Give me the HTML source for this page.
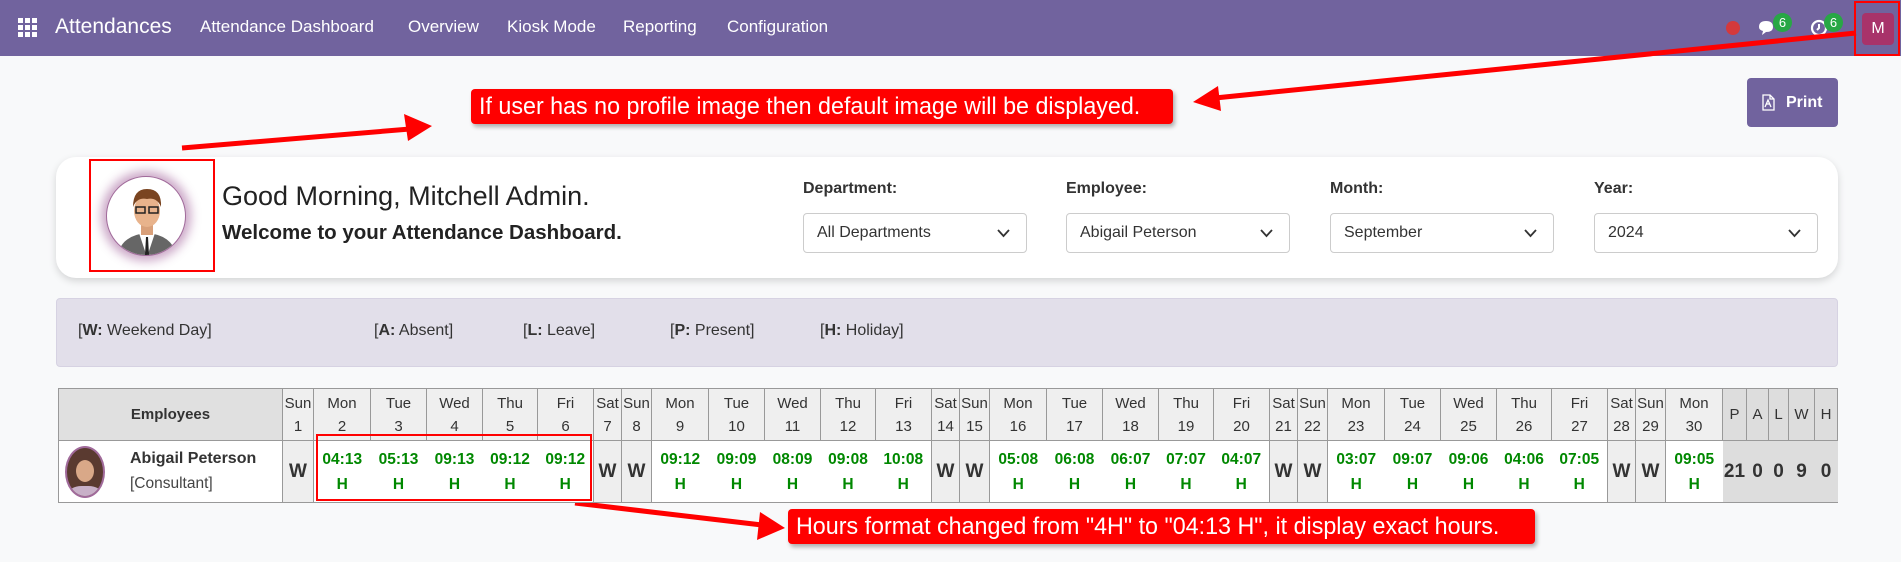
<!DOCTYPE html>
<html><head><meta charset="utf-8">
<style>
*{box-sizing:border-box;margin:0;padding:0}
body{width:1901px;height:562px;overflow:hidden;background:#f8f9fa;font-family:"Liberation Sans",sans-serif;position:relative;color:#222}
.nav{position:absolute;left:0;top:0;width:1901px;height:56px;background:#71639e;color:#fff}
.nav span{position:absolute;top:17px;font-size:17px}
.abs{position:absolute}
.callout{position:absolute;background:#f00;color:#fff;font-size:24px;border-radius:4px;box-shadow:2px 3px 4px rgba(0,0,0,.3);white-space:nowrap;padding-left:8px;line-height:35px;overflow:hidden}
.callout span{display:inline-block;transform:scaleX(.97);transform-origin:0 50%}
.card{position:absolute;left:56px;top:157px;width:1782px;height:121px;background:#fff;border-radius:20px;box-shadow:0 3px 8px rgba(0,0,0,.15)}
.lbl{position:absolute;top:180px;font-weight:bold;font-size:16px;color:#333}
.sel{position:absolute;top:213px;width:224px;height:40px;border:1px solid #ccc;border-radius:4px;background:#fff;font-size:16px;color:#333;padding:10px 0 0 13px}
.sel svg{position:absolute;right:16px;top:15px}
.legend{position:absolute;left:56px;top:298px;width:1782px;height:69px;background:#e2dfea;border:1px solid #d6d2e2;border-radius:4px}
.legend span{position:absolute;top:23px;font-size:16px;color:#333}
table{position:absolute;left:58px;top:388px;width:1778px;border-collapse:collapse;table-layout:fixed}
td,th{border:1px solid #999;text-align:center;padding:0;overflow:hidden}
th{background:#efefef;font-weight:normal;font-size:15px;line-height:23px;color:#333;height:52px}
td{height:62px}
td.w{background:#eee;font-weight:bold;font-size:19px;color:#333}
td.d{background:#fff;color:#080;font-weight:bold;font-size:15.5px;line-height:25px;border-left:none;border-right:none}
td.s{background:#ddd;font-weight:bold;font-size:19px;color:#333;border-left:none;border-right:none}
tr.h th.s{background:#ddd}
</style></head><body>
<div class="nav">
<svg class="abs" style="left:18px;top:18px" width="20" height="20"><g fill="#fff"><rect x="0" y="0" width="5" height="5"/><rect x="7" y="0" width="5" height="5"/><rect x="14" y="0" width="5" height="5"/><rect x="0" y="7" width="5" height="5"/><rect x="7" y="7" width="5" height="5"/><rect x="14" y="7" width="5" height="5"/><rect x="0" y="14" width="5" height="5"/><rect x="7" y="14" width="5" height="5"/><rect x="14" y="14" width="5" height="5"/></g></svg>
<span style="left:55px;top:15px;font-size:21px">Attendances</span>
<span style="left:200px">Attendance Dashboard</span>
<span style="left:408px">Overview</span>
<span style="left:507px">Kiosk Mode</span>
<span style="left:623px">Reporting</span>
<span style="left:727px">Configuration</span>
<div class="abs" style="left:1726px;top:21px;width:14px;height:14px;border-radius:50%;background:#d4393c"></div>
<svg class="abs" style="left:1757px;top:19px" width="20" height="18"><path d="M2 8 Q2 2 9 2 Q16 2 16 8 Q16 13 9 13 L5 16 L6 12 Q2 11 2 8Z" fill="#fff"/></svg>
<div class="abs" style="left:1773px;top:13px;width:19px;height:19px;border-radius:50%;background:#28a745;font-size:13px;text-align:center;line-height:19px">6</div>
<svg class="abs" style="left:1810px;top:19px" width="18" height="18"><circle cx="9" cy="9" r="7" fill="none" stroke="#fff" stroke-width="2.2"/><path d="M9 5 V9 L7 11" stroke="#fff" stroke-width="2" fill="none"/></svg>
<div class="abs" style="left:1824px;top:13px;width:19px;height:19px;border-radius:50%;background:#28a745;font-size:13px;text-align:center;line-height:19px">6</div>
<div class="abs" style="left:1862px;top:13px;width:32px;height:32px;border-radius:4px;background:#a8336a;font-size:16px;text-align:center;line-height:32px">M</div>
<div class="abs" style="left:1854px;top:1px;width:46px;height:55px;border:2px solid #f00"></div>
</div>
<svg class="abs" style="left:0;top:0" width="1901" height="562">
<g stroke="#f00" stroke-width="5" fill="#f00">
<line x1="182" y1="148" x2="410" y2="129"/><polygon points="432,126 404,114 408,141" stroke="none"/>
<line x1="1856" y1="33" x2="1215" y2="98"/><polygon points="1193,102 1218,86 1221,111" stroke="none"/>
<line x1="575" y1="503" x2="762" y2="525"/><polygon points="785,528 760,512 757,540" stroke="none"/>
</g></svg>
<div class="callout" style="left:471px;top:89px;width:702px"><span>If user has no profile image then default image will be displayed.</span></div>
<div class="abs" style="left:1747px;top:78px;width:91px;height:49px;background:#71639e;border-radius:4px;color:#fff;font-weight:bold;font-size:16px;line-height:49px;padding-left:39px"><svg class="abs" style="left:15px;top:16px" width="13" height="17"><path d="M1 1 H8 L12 5 V16 H1 Z M8 1 V5 H12 M3 13 L6 6 L9 13 M4 10 H8" fill="none" stroke="#fff" stroke-width="1.3"/></svg>Print</div>
<div class="card"></div>
<div class="abs" style="left:89px;top:159px;width:126px;height:113px;border:2px solid #f00"></div>
<div class="abs" style="left:106px;top:176px;width:80px;height:80px;border-radius:50%;background:#fff;box-shadow:0 0 10px 5px rgba(140,60,130,.45);border:1px solid #a06a9a;overflow:hidden">
<svg width="80" height="80"><path d="M10 80 Q14 58 40 56 Q66 58 70 80Z" fill="#666"/><path d="M32 56 L40 80 L48 56Z" fill="#fff"/><path d="M39 60 L41 60 L42 78 L38 78Z" fill="#222"/><rect x="34" y="44" width="12" height="14" fill="#d9a07a"/><ellipse cx="40" cy="34" rx="13" ry="16" fill="#e8b38c"/><path d="M26 30 Q26 12 40 12 Q55 12 54 30 Q50 20 40 22 Q30 20 26 30Z" fill="#7a4420"/><rect x="29" y="30" width="9" height="6" fill="none" stroke="#222" stroke-width="1.5"/><rect x="42" y="30" width="9" height="6" fill="none" stroke="#222" stroke-width="1.5"/></svg></div>
<div class="abs" style="left:222px;top:181px;font-size:27px;color:#222">Good Morning, Mitchell Admin.</div>
<div class="abs" style="left:222px;top:221px;font-size:20.5px;font-weight:bold;color:#222">Welcome to your Attendance Dashboard.</div>
<div class="lbl" style="left:803px">Department:</div>
<div class="lbl" style="left:1066px">Employee:</div>
<div class="lbl" style="left:1330px">Month:</div>
<div class="lbl" style="left:1594px">Year:</div>
<div class="sel" style="left:803px">All Departments<svg width="13" height="9"><path d="M1 1 L6.5 7 L12 1" fill="none" stroke="#333" stroke-width="1.8"/></svg></div>
<div class="sel" style="left:1066px">Abigail Peterson<svg width="13" height="9"><path d="M1 1 L6.5 7 L12 1" fill="none" stroke="#333" stroke-width="1.8"/></svg></div>
<div class="sel" style="left:1330px">September<svg width="13" height="9"><path d="M1 1 L6.5 7 L12 1" fill="none" stroke="#333" stroke-width="1.8"/></svg></div>
<div class="sel" style="left:1594px">2024<svg width="13" height="9"><path d="M1 1 L6.5 7 L12 1" fill="none" stroke="#333" stroke-width="1.8"/></svg></div>
<div class="legend">
<span style="left:21px">[<b>W:</b> Weekend Day]</span>
<span style="left:317px">[<b>A:</b> Absent]</span>
<span style="left:466px">[<b>L:</b> Leave]</span>
<span style="left:613px">[<b>P:</b> Present]</span>
<span style="left:763px">[<b>H:</b> Holiday]</span>
</div>
<table>
<colgroup><col style="width:224px"><col style="width:31px">
<col style="width:57px"><col style="width:56px"><col style="width:56px"><col style="width:55px"><col style="width:56px"><col style="width:28px"><col style="width:30px">
<col style="width:57px"><col style="width:56px"><col style="width:56px"><col style="width:55px"><col style="width:56px"><col style="width:28px"><col style="width:30px">
<col style="width:57px"><col style="width:56px"><col style="width:56px"><col style="width:55px"><col style="width:56px"><col style="width:28px"><col style="width:30px">
<col style="width:57px"><col style="width:56px"><col style="width:56px"><col style="width:55px"><col style="width:56px"><col style="width:28px"><col style="width:30px">
<col style="width:57px"><col style="width:24px"><col style="width:22px"><col style="width:20px"><col style="width:26px"><col style="width:23px"></colgroup>
<tr class="h"><th style="background:#e0e0e0;font-weight:bold">Employees</th>
<th>Sun<br>1</th><th>Mon<br>2</th><th>Tue<br>3</th><th>Wed<br>4</th><th>Thu<br>5</th><th>Fri<br>6</th><th>Sat<br>7</th><th>Sun<br>8</th>
<th>Mon<br>9</th><th>Tue<br>10</th><th>Wed<br>11</th><th>Thu<br>12</th><th>Fri<br>13</th><th>Sat<br>14</th><th>Sun<br>15</th>
<th>Mon<br>16</th><th>Tue<br>17</th><th>Wed<br>18</th><th>Thu<br>19</th><th>Fri<br>20</th><th>Sat<br>21</th><th>Sun<br>22</th>
<th>Mon<br>23</th><th>Tue<br>24</th><th>Wed<br>25</th><th>Thu<br>26</th><th>Fri<br>27</th><th>Sat<br>28</th><th>Sun<br>29</th>
<th>Mon<br>30</th><th class="s">P</th><th class="s">A</th><th class="s">L</th><th class="s">W</th><th class="s">H</th></tr>
<tr><td style="background:#fff;text-align:left;position:relative">
<div class="abs" style="left:6px;top:5px;width:40px;height:52px;border-radius:50%;background:#5a3a30;border:2px solid #a06a9a;overflow:hidden"><div style="margin:12px auto 0;width:18px;height:22px;border-radius:50%;background:#d9a888"></div><div style="margin:4px auto 0;width:34px;height:20px;border-radius:40% 40% 0 0;background:#c8b0c8"></div></div>
<div class="abs" style="left:71px;top:9px;font-weight:bold;font-size:16px;color:#333">Abigail Peterson</div>
<div class="abs" style="left:71px;top:34px;font-size:15.5px;color:#444">[Consultant]</div></td>
<td class="w">W</td><td class="d">04:13<br>H</td><td class="d">05:13<br>H</td><td class="d">09:13<br>H</td><td class="d">09:12<br>H</td><td class="d">09:12<br>H</td><td class="w">W</td><td class="w">W</td>
<td class="d">09:12<br>H</td><td class="d">09:09<br>H</td><td class="d">08:09<br>H</td><td class="d">09:08<br>H</td><td class="d">10:08<br>H</td><td class="w">W</td><td class="w">W</td>
<td class="d">05:08<br>H</td><td class="d">06:08<br>H</td><td class="d">06:07<br>H</td><td class="d">07:07<br>H</td><td class="d">04:07<br>H</td><td class="w">W</td><td class="w">W</td>
<td class="d">03:07<br>H</td><td class="d">09:07<br>H</td><td class="d">09:06<br>H</td><td class="d">04:06<br>H</td><td class="d">07:05<br>H</td><td class="w">W</td><td class="w">W</td>
<td class="d">09:05<br>H</td><td class="s">21</td><td class="s">0</td><td class="s">0</td><td class="s">9</td><td class="s">0</td></tr>
</table>
<div class="abs" style="left:316px;top:434px;width:276px;height:67px;border:2px solid #f00"></div>
<div class="callout" style="left:788px;top:509px;width:747px"><span>Hours format changed from "4H" to "04:13 H", it display exact hours.</span></div>
</body></html>
